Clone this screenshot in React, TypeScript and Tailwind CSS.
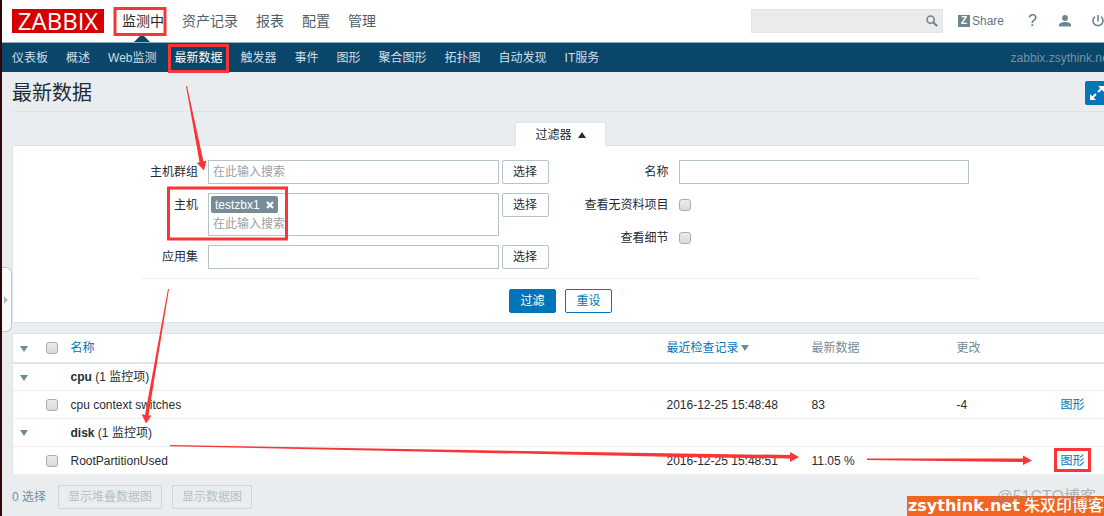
import React from 'react';

interface Item {
    name: string;
    lastCheck: string;
    value: string;
    change: string;
}

interface ItemGroup {
    name: string;
    items: Item[];
}

const MAIN_MENU = ['监测中', '资产记录', '报表', '配置', '管理'];
const SUB_MENU = ['仪表板', '概述', 'Web监测', '最新数据', '触发器', '事件', '图形', '聚合图形', '拓扑图', '自动发现', 'IT服务'];

const GROUPS: ItemGroup[] = [
    { name: 'cpu', items: [{ name: 'cpu context switches', lastCheck: '2016-12-25 15:48:48', value: '83', change: '-4' }] },
    { name: 'disk', items: [{ name: 'RootPartitionUsed', lastCheck: '2016-12-25 15:48:51', value: '11.05 %', change: '' }] },
];

const SearchIcon = () => (
    <svg width="12" height="12" viewBox="0 0 12 12" fill="none" stroke="#6f8591">
        <circle cx="4.6" cy="4.6" r="3.6" strokeWidth="1.6" />
        <path d="M7.2 7.2L11.2 11.2" strokeWidth="2" />
    </svg>
);

const UserIcon = () => (
    <svg width="12" height="12" viewBox="0 0 12 12" fill="#6f8591">
        <circle cx="6" cy="3" r="2.9" />
        <path d="M0 11.6V10C0 8 3 7 6 7s6 1 6 3v1.6z" />
    </svg>
);

const PowerIcon = () => (
    <svg width="12" height="12" viewBox="0 0 12 12" fill="none" stroke="#6f8591" strokeWidth="1.6">
        <path d="M6 0v6.4M3 1.6a5 5 0 1 0 6 0" />
    </svg>
);

const ExpandIcon = () => (
    <svg width="16" height="16" viewBox="0 0 16 16" fill="#fff" stroke="#fff">
        <path d="M9 1h6v6zM1 9v6h6z" stroke="none" />
        <path d="M9 7L13 3M3 13L7 9" strokeWidth="2" />
    </svg>
);

const Caret: React.FC<{ up?: boolean; color?: string }> = ({ up, color = '#6f8a98' }) => (
    <svg width="8" height="6" viewBox="0 0 8 6" fill={color} className="inline-block">
        <path d={up ? 'M4 0L8 6H0z' : 'M0 0H8L4 6z'} />
    </svg>
);

const Checkbox: React.FC<{ id?: string; label?: string }> = ({ id, label }) => (
    <input
        id={id}
        type="checkbox"
        aria-label={label}
        className="block size-3 appearance-none rounded-[3px] border border-[#adadad] bg-linear-to-b from-[#ececec] to-[#dadada] checked:bg-[#0275b8]"
    />
);

const SelectButton = () => (
    <button type="button" className="h-6 w-[47px] shrink-0 rounded-[2px] border border-[#b5c4cb] bg-white hover:bg-gray-50">
        选择
    </button>
);

const Header = () => (
    <header className="overflow-hidden bg-white">
        <div className="flex h-[42px] items-center pl-[10px]">
            <a href="#" className="flex h-6 w-[92px] items-center justify-center bg-[#d40000] font-['Open_Sans'] text-2xl leading-6 font-medium text-white">
                ZABBIX
            </a>
            <nav className="ml-[18px] flex h-full gap-[18px] text-sm text-[#4f5f68]">
                {MAIN_MENU.map((label, i) => (
                    <a key={label} href="#" className={`relative flex items-center ${i === 0 ? 'text-[#1f2c33]' : ''}`}>
                        {label}
                        {i === 0 && (
                            <svg width="16" height="8" viewBox="0 0 16 8" className="absolute bottom-0 left-3" fill="#0a466a">
                                <path d="M8 0L16 8H0z" />
                            </svg>
                        )}
                    </a>
                ))}
            </nav>
            <div className="ml-auto flex items-center text-[#5f7480]">
                <div className="flex h-6 w-48 items-center border border-[#e3e3e3] bg-[#ebebeb] pr-1">
                    <input type="text" aria-label="搜索" className="min-w-0 flex-1 px-1 outline-none" />
                    <button type="button" aria-label="搜索"><SearchIcon /></button>
                </div>
                <a href="#" className="ml-[15px] flex items-center gap-[2px]">
                    <span className="flex size-3 items-center justify-center bg-[#6f8591] text-[10px] font-bold leading-3 text-white">Z</span>
                    Share
                </a>
                <a href="#" className="ml-6 w-[7px] text-center text-base leading-4">?</a>
                <a href="#" aria-label="用户" className="ml-6"><UserIcon /></a>
                <a href="#" aria-label="退出" className="ml-[21px]"><PowerIcon /></a>
            </div>
        </div>
        <div className="border-t border-[#8fb0bd] bg-[#0a466a]">
            <nav className="-mr-2 flex h-[29px] gap-[18px] pl-[10px] text-[#cfdfe7]">
                {SUB_MENU.map(label => (
                    <a
                        key={label}
                        href="#"
                        className={`flex items-center border-y-2 border-t-transparent ${label === '最新数据' ? 'border-b-[#0f7dc8] text-white' : 'border-b-transparent'}`}
                    >
                        {label}
                    </a>
                ))}
                <span className="ml-auto flex items-center text-[#6f92a6]">zabbix.zsythink.net</span>
            </nav>
        </div>
    </header>
);

const Filter = () => (
    <section>
        <div className="flex justify-center">
            <button type="button" className="-mb-px flex h-6 w-[91px] items-center justify-center gap-[6px] border border-b-0 border-[#dfe4e7] bg-white">
                过滤器 <Caret up color="#1f2c33" />
            </button>
        </div>
        <form className="border border-[#dfe4e7] bg-white pt-[14px] pb-[9px]" onSubmit={e => e.preventDefault()}>
            <div className="mx-auto max-w-[837px]">
                <div className="grid grid-cols-2 border-b border-[#ebeef0] pb-[9px]">
                    <div className="space-y-[9px] pr-3">
                        <div className="flex">
                            <label htmlFor="groups" className="mr-[10px] w-14 text-right leading-6">主机群组</label>
                            <input id="groups" placeholder="在此输入搜索" className="mr-[3px] h-6 min-w-0 flex-1 border border-[#b5c4cb] px-1 outline-none placeholder:text-[#a0a0a0]" />
                            <SelectButton />
                        </div>
                        <div className="flex items-start">
                            <label htmlFor="hosts" className="mr-[10px] w-14 text-right leading-6">主机</label>
                            <div className="mr-[3px] min-w-0 flex-1 border border-[#b5c4cb] px-[2px] pt-[2px]">
                                <span className="flex h-[17px] w-[67px] items-center justify-between rounded-[2px] bg-[#768d99] px-1 text-white">
                                    testzbx1
                                    <button type="button" aria-label="移除 testzbx1">
                                        <svg width="8" height="8" viewBox="0 0 8 8" stroke="#fff" strokeWidth="2.2">
                                            <path d="M1 1L7 7M7 1L1 7" />
                                        </svg>
                                    </button>
                                </span>
                                <input id="hosts" placeholder="在此输入搜索" className="block h-[22px] w-full px-[2px] outline-none placeholder:text-[#a0a0a0]" />
                            </div>
                            <SelectButton />
                        </div>
                        <div className="flex">
                            <label htmlFor="app" className="mr-[10px] w-14 text-right leading-6">应用集</label>
                            <input id="app" className="mr-[3px] h-6 min-w-0 flex-1 border border-[#b5c4cb] px-1 outline-none" />
                            <SelectButton />
                        </div>
                    </div>
                    <div className="space-y-[9px] pr-[10px] pl-3">
                        <div className="flex">
                            <label htmlFor="name" className="mr-[10px] w-24 text-right leading-6">名称</label>
                            <input id="name" className="h-6 min-w-0 flex-1 border border-[#b5c4cb] px-1 outline-none" />
                        </div>
                        <div className="flex items-center">
                            <label htmlFor="nodata" className="mr-[10px] w-24 text-right leading-6">查看无资料项目</label>
                            <Checkbox id="nodata" />
                        </div>
                        <div className="flex items-center">
                            <label htmlFor="details" className="mr-[10px] w-24 text-right leading-6">查看细节</label>
                            <Checkbox id="details" />
                        </div>
                    </div>
                </div>
                <div className="mt-[10px] flex justify-center gap-[9px]">
                    <button type="submit" className="h-6 w-[47px] rounded-[2px] border border-[#0275b8] bg-[#0275b8] text-white">过滤</button>
                    <button type="reset" className="h-6 w-[47px] rounded-[2px] border border-[#0275b8] bg-white text-[#0275b8]">重设</button>
                </div>
            </div>
        </form>
    </section>
);

const DataTable = () => (
    <table className="mt-[10px] w-full table-fixed border border-[#dfe4e7] bg-white text-left">
        <colgroup>
            <col className="w-[33px]" />
            <col className="w-[25px]" />
            <col />
            <col className="w-[145px]" />
            <col className="w-[145px]" />
            <col className="w-[104px]" />
            <col className="w-12" />
        </colgroup>
        <thead>
            <tr className="h-[29px] border-b-2 border-[#dfe4e7] text-[#768d99] *:font-normal">
                <th className="pl-[7px]"><button type="button" aria-label="折叠" className="block"><Caret /></button></th>
                <th><Checkbox label="全选" /></th>
                <th><a href="#" className="text-[#0275b8]">名称</a></th>
                <th><a href="#" className="flex items-center gap-[2px] text-[#0275b8]">最近检查记录 <Caret /></a></th>
                <th>最新数据</th>
                <th>更改</th>
                <th></th>
            </tr>
        </thead>
        <tbody>
            {GROUPS.map(group => (
                <React.Fragment key={group.name}>
                    <tr className="h-7 border-b border-[#ebeef0]">
                        <td className="pl-[7px]"><button type="button" aria-label="折叠" className="block"><Caret /></button></td>
                        <td></td>
                        <td colSpan={5}><b>{group.name}</b> ({group.items.length} 监控项)</td>
                    </tr>
                    {group.items.map(item => (
                        <tr key={item.name} className="h-7 border-b border-[#ebeef0]">
                            <td></td>
                            <td><Checkbox label={item.name} /></td>
                            <td>{item.name}</td>
                            <td>{item.lastCheck}</td>
                            <td>{item.value}</td>
                            <td>{item.change}</td>
                            <td><a href="#" className="text-[#0275b8]">图形</a></td>
                        </tr>
                    ))}
                </React.Fragment>
            ))}
        </tbody>
    </table>
);

// Red boxes and arrows that walk the reader through the page
const Annotations = () => (
    <svg width="1104" height="516" viewBox="0 0 1104 516" className="pointer-events-none absolute top-0 -left-[2px] max-w-none" fill="#fb3535">
        <g fill="none" stroke="#fb3535" strokeWidth="3">
            <rect x="115" y="8.500" width="50" height="26" />
            <rect x="169.500" y="45.500" width="58" height="26" />
            <rect x="168.500" y="188" width="118" height="51" />
            <rect x="1055.500" y="449.500" width="34" height="21" />
        </g>
        <path d="M186 86L199.500 162L197 163L204 170.500L206.500 160.500L203.500 161.500L187 86Z" />
        <path d="M168 289L145 415L141.500 414L146 423.500L151.500 415.500L148.500 415.500L169 289Z" />
        <path d="M170 445L170 446.200L680 457L790 458.500V462L799 457L790 452V455L680 453.500Z" />
        <path d="M867 458.500V460L1023 462V465L1032 460.500L1023 455.500V458.500Z" />
    </svg>
);

const App: React.FC = () => {
    return (
        <div className="relative min-h-screen overflow-hidden border-l-2 border-[#2e070b] bg-[#e9edf0] font-['Liberation_Sans','Noto_Sans_CJK_SC',sans-serif] text-xs text-[#1f2c33]">
            <Header />
            <main className="-mr-[5px] pl-[10px]">
                <div className="flex h-10 items-center border-b border-[#dfe4e7] pt-[2px]">
                    <h1 className="text-xl">最新数据</h1>
                    <button type="button" aria-label="全屏" className="ml-auto flex size-6 items-center justify-center rounded-[2px] bg-[#0275b8]">
                        <ExpandIcon />
                    </button>
                </div>
                <div className="mt-[10px]">
                    <Filter />
                </div>
                <DataTable />
                <div className="mt-[10px] flex items-center gap-[10px] text-[#768d99]">
                    <span className="mr-[2px]">0 选择</span>
                    <button type="button" disabled className="h-6 rounded-[2px] border border-[#ccd5d9] px-[9px] text-[#b3c1c8]">显示堆叠数据图</button>
                    <button type="button" disabled className="h-6 rounded-[2px] border border-[#ccd5d9] px-[9px] text-[#b3c1c8]">显示数据图</button>
                </div>
            </main>
            <button type="button" aria-label="展开侧栏" className="absolute top-[267px] left-0 h-[65px] w-[10px] rounded-r-md border border-l-0 border-[#c0cad0] bg-[#fafafa]">
                <svg width="4" height="8" viewBox="0 0 4 8" fill="#b4bcc0" className="ml-[2px]">
                    <path d="M0 0L4 4L0 8z" />
                </svg>
            </button>
            <Annotations />
            <div className="absolute right-0 bottom-0 flex h-5 w-[197px] items-center justify-between overflow-hidden bg-[#f26522] pl-px whitespace-nowrap text-white">
                <span className="font-['DejaVu_Sans'] text-base font-bold leading-5">zsythink.net</span>
                <span className="text-base font-medium leading-5">朱双印博客</span>
            </div>
            <span className="absolute right-2 bottom-[9px] text-base leading-5 text-[#8a8a8a]/60">@51CTO博客</span>
        </div>
    );
};

export default App;
